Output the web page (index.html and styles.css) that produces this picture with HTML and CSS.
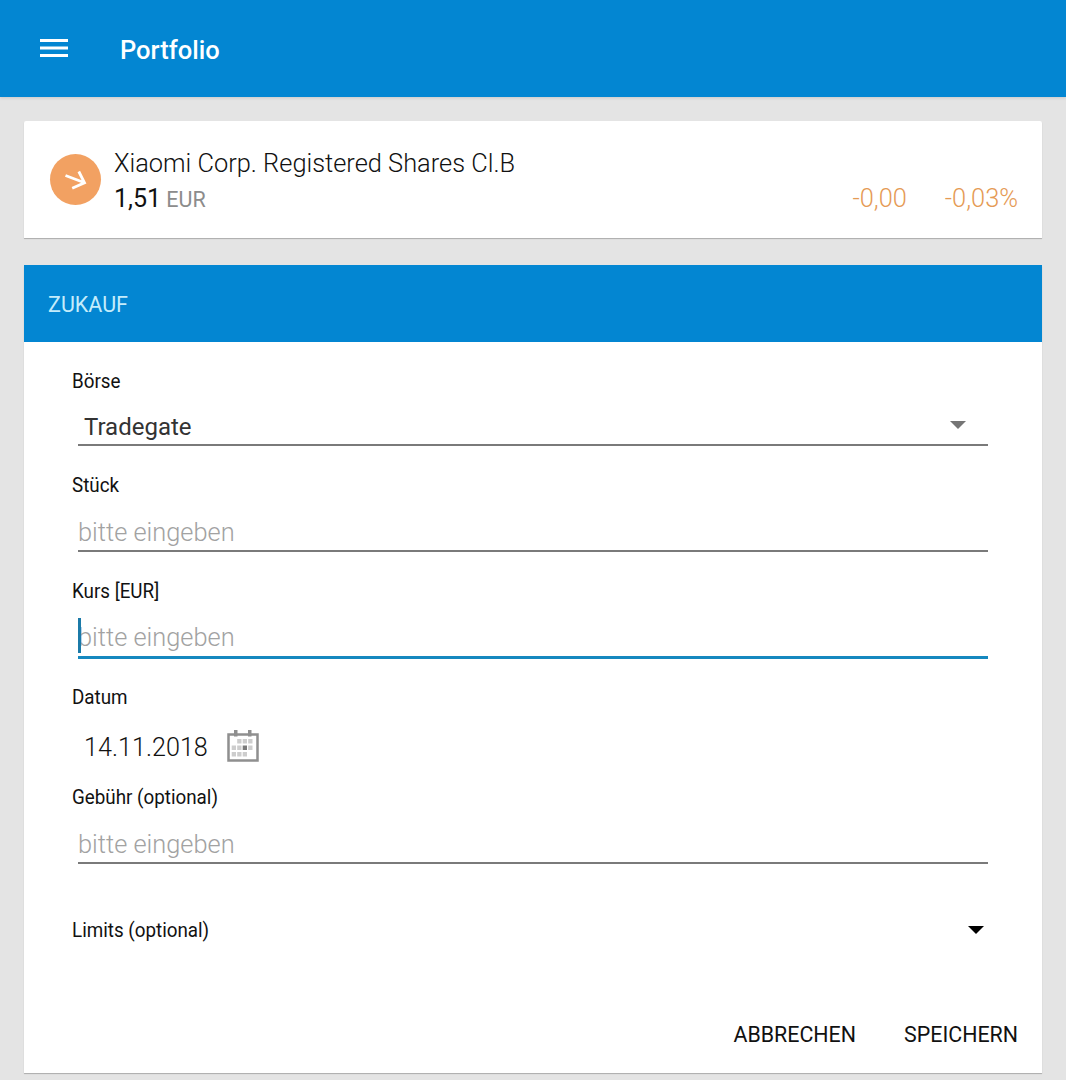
FILE: index.html
```html
<!DOCTYPE html>
<html lang="de">
<head>
<meta charset="utf-8">
<title>Portfolio</title>
<link rel="stylesheet" href="styles.css">
</head>
<body>
<header class="appbar">
  <svg class="menu-icon" width="28" height="20" viewBox="0 0 28 20"><path d="M0 2.500h28M0 10h28M0 17.500h28" stroke="#fff" stroke-width="3" fill="none"/></svg>
  <h1 class="appbar-title">Portfolio</h1>
</header>
<main class="content">
  <section class="card quote">
    <span class="trend"><svg width="24" height="24" viewBox="0 0 24 24"><path d="M1.500 7.500 20.500 14.800M14.800 3.500 20.500 14.800 8.200 20.200" stroke="#fff" stroke-width="2.800" fill="none"/></svg></span>
    <div class="quote-main">
      <div class="quote-name">Xiaomi Corp. Registered Shares Cl.B</div>
      <div class="quote-price">1,51 <span class="quote-cur">EUR</span></div>
    </div>
    <div class="quote-change"><span>-0,00</span><span>-0,03%</span></div>
  </section>
  <section class="card order">
    <div class="order-head">ZUKAUF</div>
    <form class="order-form">
      <div class="field field-select">
        <div class="label">Börse</div>
        <div class="control select"><span class="value">Tradegate</span><span class="caret caret-grey"></span></div>
      </div>
      <div class="field field-input">
        <div class="label">Stück</div>
        <div class="control"><span class="placeholder">bitte eingeben</span></div>
      </div>
      <div class="field field-input">
        <div class="label">Kurs [EUR]</div>
        <div class="control focused"><span class="cursor"></span><span class="placeholder">bitte eingeben</span></div>
      </div>
      <div class="field field-date">
        <div class="label">Datum</div>
        <div class="date-row"><span class="value">14.11.2018</span>
          <svg class="cal" width="34" height="34" viewBox="0 0 34 34">
            <path d="M2.500 5.500h29v26h-29z" fill="none" stroke="#8f8f8f" stroke-width="2.500"/>
            <path d="M8 1h3.500v6.500H8zM22 1h3.500v6.500H22z" fill="#8f8f8f"/>
            <path d="M11.200 10h4.300v4.500h-4.300zM16.700 10H21v4.500h-4.300zM22.200 10h4.300v4.500h-4.300zM5.700 16.500H10V21H5.700zM11.200 16.500h4.300V21h-4.300zM22.200 16.500h4.300V21h-4.300zM5.700 23H10v4.500H5.700zM11.200 23h4.300v4.500h-4.300zM16.700 23H21v4.500h-4.300z" fill="#cdcdcd"/>
            <path d="M16.700 16.500H21V21h-4.300z" fill="#7a7a7a"/>
          </svg>
        </div>
      </div>
      <div class="field field-fee">
        <div class="label">Gebühr (optional)</div>
        <div class="control"><span class="placeholder">bitte eingeben</span></div>
      </div>
      <div class="limits"><span class="label">Limits (optional)</span><span class="caret"></span></div>
      <div class="actions"><span class="action">ABBRECHEN</span><span class="action">SPEICHERN</span></div>
    </form>
  </section>
</main>
</body>
</html>
```
FILE: styles.css
```css
* { box-sizing: border-box; }
html, body { margin: 0; height: 1080px; overflow: hidden; }
body { background: #e4e4e4; font-family: Roboto, "Liberation Sans", sans-serif; color: #1a1a1a; }

.appbar { height: 97px; background: #0386d2; display: flex; align-items: center; padding-left: 40px; box-shadow: 0 1px 3px rgba(0,0,0,.12); }
.menu-icon { display: block; margin-right: 52px; margin-top: -2px; }
.appbar-title { margin: 0; font-size: 25.5px; font-weight: 500; color: #fff; padding-top: 3px; }

.content { padding: 24px 24px 0; display: flex; flex-direction: column; gap: 27px; }
.card { background: #fff; border-radius: 2px 2px 0 0; box-shadow: 0 1px 1px rgba(0,0,0,.25); }

.quote { height: 117px; display: flex; align-items: center; padding: 0 24px; }
.trend { width: 51px; height: 51px; border-radius: 50%; background: #f2a162; display: flex; align-items: center; justify-content: center; margin: 0 13px 0 2px; flex: none; }
.quote-main { flex: 1; margin-top: 4px; }
.quote-name { font-size: 25.4px; font-weight: 300; line-height: 34px; color: #111; }
.quote-price { font-size: 25px; font-weight: 400; line-height: 35px; padding-top: 1px; color: #111; }
.quote-cur { font-size: 21.5px; color: #8c8c8c; margin-left: -1px; }
.quote-change { align-self: flex-end; display: flex; gap: 38px; font-size: 25.4px; font-weight: 300; color: #e59a55; line-height: 34px; margin-bottom: 23px; }

.order { height: 808px; }
.order-head { height: 77px; background: #0386d2; color: #c4ecfb; font-size: 21.5px; font-weight: 400; display: flex; align-items: center; padding-left: 24px; padding-top: 1px; }
.order-form { padding: 26px 54px 0 48px; }

.label { font-size: 20px; line-height: 26px; color: #111; display: block; transform: scaleX(.94); transform-origin: left center; }
.field { display: flex; flex-direction: column; }
.control { margin-left: 6px; height: 38px; border-bottom: 2px solid #7a7a7a; display: flex; align-items: center; position: relative; font-size: 25.4px; font-weight: 300; }
.select { padding: 3px 0 0 6px; height: 40px; }
.value { font-size: 25.2px; font-weight: 300; color: #111; }
.select .value { font-size: 24px; font-weight: 400; color: #333; }
.placeholder { color: #a2a2a2; }
.focused { border-bottom: 3px solid #1588bf; height: 39px; padding-bottom: 2px; }
.cursor { position: absolute; left: 0; top: -2px; bottom: 3px; width: 3px; background: #1b7aa8; }
.field-select { height: 104px; }
.field-select .control { margin-top: 12px; }
.field-input { height: 106px; }
.field-input .control { margin-top: 16px; }
.field-date { height: 100px; }
.date-row { display: flex; align-items: center; padding-left: 12px; gap: 18px; margin-top: 21px; }
.cal { display: block; margin-top: -2px; }
.field-fee .control { margin-top: 16px; }
.field-fee { height: 133px; }

.caret { width: 0; height: 0; border-left: 8px solid transparent; border-right: 8px solid transparent; border-top: 8px solid #000; }
.caret-grey { position: absolute; right: 22px; top: 15px; border-top-color: #757575; }
.limits { display: flex; justify-content: space-between; align-items: center; padding-right: 4px; height: 26px; }

.actions { display: flex; justify-content: flex-end; gap: 48px; margin-right: -30px; margin-top: 78px; }
.action { font-size: 21.4px; line-height: 28px; color: #111; }
```
